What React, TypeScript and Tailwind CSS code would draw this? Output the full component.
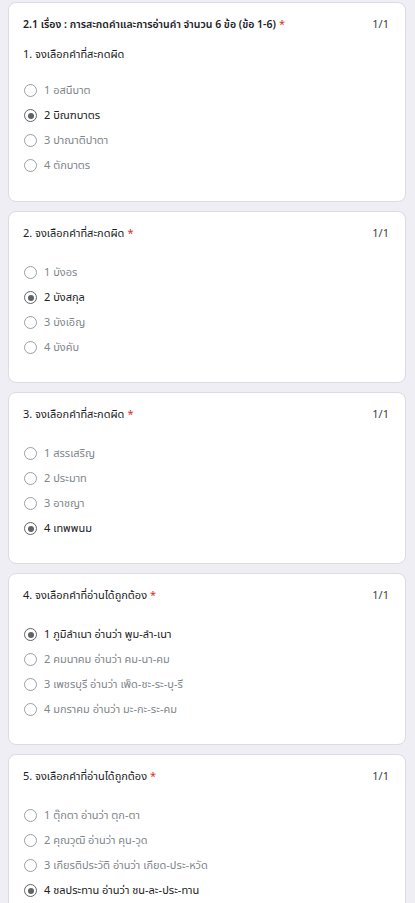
import React from "react";

type Q = {
  title: string;
  sub?: string;
  star?: boolean;
  bold?: boolean;
  options: string[];
  selected: number;
};

const questions: Q[] = [
  {
    title: "2.1 เรื่อง : การสะกดคำและการอ่านคำ จำนวน 6 ข้อ (ข้อ 1-6)",
    sub: "1. จงเลือกคำที่สะกดผิด",
    star: true,
    bold: true,
    options: ["1 อสนีบาต", "2 บิณฑบาตร", "3 ปาณาติปาตา", "4 ตักบาตร"],
    selected: 1,
  },
  {
    title: "2. จงเลือกคำที่สะกดผิด",
    star: true,
    options: ["1 บังอร", "2 บังสกุล", "3 บังเอิญ", "4 บังคับ"],
    selected: 1,
  },
  {
    title: "3. จงเลือกคำที่สะกดผิด",
    star: true,
    options: ["1 สรรเสริญ", "2 ประมาท", "3 อาชญา", "4 เทพพนม"],
    selected: 3,
  },
  {
    title: "4. จงเลือกคำที่อ่านได้ถูกต้อง",
    star: true,
    options: [
      "1 ภูมิลำเนา อ่านว่า พูม-ลำ-เนา",
      "2 คมนาคม อ่านว่า คม-นา-คม",
      "3 เพชรบุรี อ่านว่า เพ็ด-ชะ-ระ-บุ-รี",
      "4 มกราคม อ่านว่า มะ-กะ-ระ-คม",
    ],
    selected: 0,
  },
  {
    title: "5. จงเลือกคำที่อ่านได้ถูกต้อง",
    star: true,
    options: [
      "1 ตุ๊กตา อ่านว่า ตุก-ตา",
      "2 คุณวุฒิ อ่านว่า คุน-วุด",
      "3 เกียรติประวัติ อ่านว่า เกียด-ประ-หวัด",
      "4 ชลประทาน อ่านว่า ชน-ละ-ประ-ทาน",
    ],
    selected: 3,
  },
];

function Radio({ on }: { on: boolean }) {
  return (
    <span
      className={
        "flex h-[13px] w-[13px] shrink-0 items-center justify-center rounded-full border-[1.5px] " +
        (on ? "border-[#5f6368]" : "border-[#9aa0a6]")
      }
    >
      {on ? <span className="h-[6px] w-[6px] rounded-full bg-[#5f6368]" /> : null}
    </span>
  );
}

function Card({ q }: { q: Q }) {
  return (
    <div
      className={
        "shrink-0 rounded-lg border border-[#dadce0] bg-white pl-[14px] pr-[16px] pt-[14px] " +
        (q.sub ? "pb-[23px]" : "pb-[22px]")
      }
    >
      <div className="flex items-start justify-between">
        <div
          className={
            "leading-[16px] text-[#202124] " +
            (q.bold ? "text-[10.5px] font-semibold" : "text-[11px]")
          }
        >
          {q.title}
          {q.star ? <span className="ml-[3px] text-[11px] font-normal text-[#d93025]">*</span> : null}
        </div>
        <div className="text-[11px] leading-[16px] text-[#3c4043]">1/1</div>
      </div>
      {q.sub ? (
        <div className="mt-[14px] text-[11px] leading-[16px] text-[#202124]">{q.sub}</div>
      ) : null}
      <div className={q.sub ? "mt-[15px] flex flex-col" : "mt-[18px] flex flex-col"}>
        {q.options.map((o, i) => (
          <div key={i} className="flex h-[25px] items-center gap-[7px] pl-[1px]">
            <Radio on={i === q.selected} />
            <span
              className={
                "text-[11px] leading-[16px] " +
                (i === q.selected ? "text-[#202124]" : "text-[#80868b]")
              }
            >
              {o}
            </span>
          </div>
        ))}
      </div>
    </div>
  );
}

export default function App() {
  return (
    <div
      className="flex h-[903px] flex-col gap-[9px] overflow-hidden bg-[#f0eef5] pl-2 pr-[9px] pt-[2px]"
      style={{ fontFamily: '"Noto Sans Thai", "Noto Sans", "Liberation Sans", sans-serif' }}
    >
      {questions.map((q, i) => (
        <Card key={i} q={q} />
      ))}
    </div>
  );
}
